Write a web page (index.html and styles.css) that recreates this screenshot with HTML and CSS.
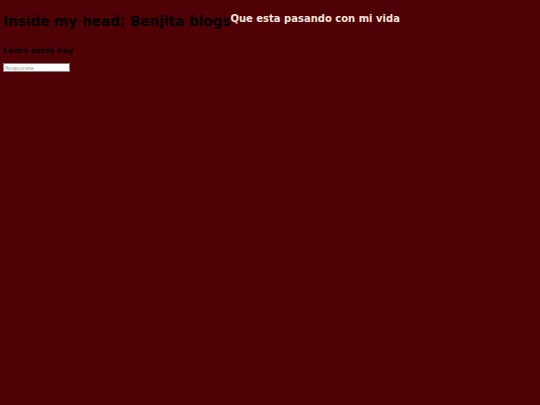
FILE: index.html
```html
<!DOCTYPE html>
<html>
<head>
<meta charset="utf-8">
<link rel="stylesheet" href="styles.css">
</head>
<body>
<header class="header">
  <h1 class="title">Inside my head: Benjita blogs</h1>
  <h2 class="subtitle">Que esta pasando con mi vida</h2>
</header>
<section class="post">
  <h3 class="question">Como estoy hoy</h3>
  <input class="answer" type="text" placeholder="Respuesta">
</section>
</body>
</html>
```
FILE: styles.css
```css
html, body {
  background: #4f0004;
}
body {
  margin: 0;
  padding: 0 3px;
  font-family: "DejaVu Sans", Verdana, sans-serif;
  color: #000;
}
.header {
  display: flex;
  align-items: flex-start;
  padding-top: 13px;
}
.title {
  margin: 0;
  font-size: 13.6px;
  font-weight: bold;
  line-height: 16px;
}
.subtitle {
  margin: 0;
  font-size: 10px;
  line-height: 12px;
  font-weight: bold;
  color: #f2e4da;
}
.post {
  padding-top: 17px;
}
.question {
  margin: 0 0 7px;
  font-size: 7.8px;
  line-height: 10px;
  font-weight: bold;
}
.answer {
  display: block;
  margin: 0;
  box-sizing: border-box;
  width: 67px;
  height: 9px;
  padding: 0 1px;
  border: 1px solid #8a7a7a;
  background: #fff;
  font-family: "DejaVu Sans", sans-serif;
  font-size: 5.5px;
}
.answer::placeholder {
  color: #999;
}
```
